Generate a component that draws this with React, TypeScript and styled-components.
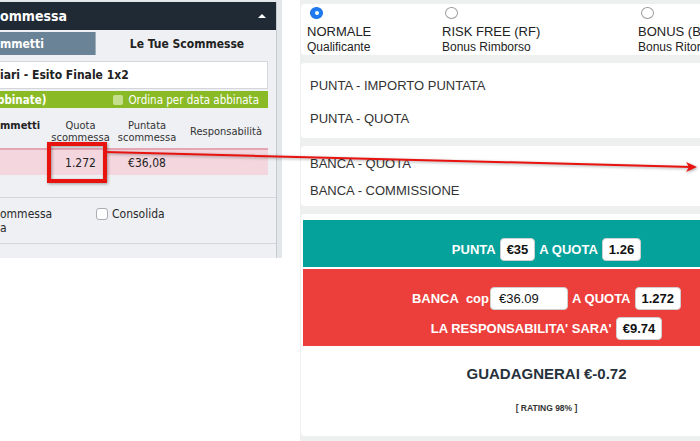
import React from "react";
import styled, { createGlobalStyle } from "styled-components";

const Global = createGlobalStyle`
  html, body { margin: 0; padding: 0; background: #ffffff; }
  body { width: 700px; height: 441px; overflow: hidden; }
  #root { width: 700px; height: 441px; }
  * { box-sizing: border-box; }
`;

const Page = styled.div`
  position: relative;
  display: flex;
  align-items: flex-start;
  width: 700px;
  height: 441px;
  overflow: hidden;
  background: #ffffff;
`;

/* ---------- left screenshot ---------- */
const LeftShot = styled.div`
  flex: 0 0 282px;
  height: 258px;
  padding-top: 2px;
  background: #e4e7ea;
  overflow: hidden;
  font-family: "DejaVu Sans Condensed", "DejaVu Sans", sans-serif;
  font-stretch: condensed;
  color: #2a2a2a;
`;

const Panel = styled.div`
  width: 277px;
  height: 256px;
  background: #eef0f4;
  border-right: 1px solid #c6cbd0;
  display: flex;
  flex-direction: column;
`;

const PanelHeader = styled.div`
  height: 28px;
  flex: 0 0 28px;
  background: #1f2a35;
  color: #ffffff;
  font-weight: bold;
  font-size: 14px;
  display: flex;
  align-items: center;
  justify-content: space-between;
  padding-right: 10px;
`;

const Caret = styled.span`
  width: 0;
  height: 0;
  border-left: 4px solid transparent;
  border-right: 4px solid transparent;
  border-bottom: 4px solid #ffffff;
  margin-top: -1px;
`;

const Tabs = styled.div`
  display: flex;
  height: 23px;
  flex: 0 0 23px;
  margin-top: 2px;
`;

const Tab = styled.div<{ $active?: boolean }>`
  display: flex;
  align-items: center;
  font-weight: bold;
  font-size: 12px;
  ${(p) =>
    p.$active
      ? `flex: 1; justify-content: center; color: #222; padding-left: 2px;`
      : `flex: 0 0 96px; background: #6b8396; color: #fff; border-right: 1px solid #9fb0bd;`}
`;

const EventBox = styled.div`
  margin: 6px 8px 0 0;
  height: 28px;
  flex: 0 0 28px;
  background: #ffffff;
  border: 1px solid #d3d7dc;
  border-left: none;
  display: flex;
  align-items: center;
  font-weight: bold;
  font-size: 12px;
  color: #222;
`;

const GreenBar = styled.div`
  margin: 2px 8px 0 0;
  height: 17px;
  flex: 0 0 17px;
  background: #8aba25;
  color: #ffffff;
  display: flex;
  align-items: center;
  justify-content: space-between;
  font-size: 11.5px;
  padding-right: 9px;
`;

const GreenTitle = styled.span`
  font-weight: bold;
  margin-left: -3px;
`;

const SortOption = styled.span`
  display: flex;
  align-items: center;
  gap: 5px;
`;

const GreenCheck = styled.span`
  width: 10px;
  height: 10px;
  border-radius: 2px;
  background: #c6df8f;
`;

const ColGrid = `
  display: grid;
  grid-template-columns: 51px 59px 74px 1fr;
`;

const HeadRow = styled.div`
  ${ColGrid}
  margin-right: 8px;
  height: 40px;
  flex: 0 0 40px;
  padding-top: 7px;
  align-items: center;
  font-size: 11px;
  line-height: 11.5px;
  color: #333;
`;

const HeadCell = styled.div<{ $first?: boolean }>`
  text-align: ${(p) => (p.$first ? "left" : "center")};
  white-space: nowrap;
  ${(p) => (p.$first ? "align-self: start; margin-top: 5px; font-weight: bold; color: #222;" : "")}
`;

const BetRow = styled.div`
  ${ColGrid}
  margin-right: 8px;
  height: 27px;
  flex: 0 0 27px;
  background: #f4d7de;
  border-top: 2px solid #e6a5b3;
  align-items: center;
  font-size: 12px;
  color: #222;
`;

const BetCell = styled.div`
  text-align: center;
`;

const OptionsRow = styled.div`
  margin-top: 22px;
  height: 47px;
  flex: 0 0 47px;
  border-top: 1px solid #d3d7db;
  border-bottom: 1px solid #d3d7db;
  display: flex;
  align-items: flex-start;
  padding-top: 9px;
  font-size: 12px;
  line-height: 14px;
  color: #2a2a2a;
`;

const OptionText = styled.div`
  width: 96px;
`;

const Consolida = styled.label`
  display: flex;
  align-items: center;
  gap: 4px;
`;

const WhiteCheck = styled.span`
  width: 12px;
  height: 12px;
  border: 1px solid #a9adb2;
  border-radius: 3px;
  background: #ffffff;
`;

/* ---------- right screenshot ---------- */
const RightShot = styled.div`
  flex: 0 0 494px;
  margin-left: 18px;
  height: 441px;
  background: #eef0f0;
  padding: 4px 2px 0 1px;
  font-family: "Liberation Sans", Arial, Helvetica, sans-serif;
  color: #333;
  display: flex;
  flex-direction: column;
  gap: 8px;
`;

const Card = styled.div`
  background: #ffffff;
  border-radius: 4px;
`;

const RadioCard = styled(Card)`
  height: 51px;
  display: flex;
  padding-left: 6px;
`;

const RadioOption = styled.div<{ $w?: number }>`
  ${(p) => (p.$w ? `flex: 0 0 ${p.$w}px;` : "flex: 1;")}
  display: flex;
  flex-direction: column;
  padding-top: 3px;
`;

const Radio = styled.span<{ $on?: boolean }>`
  width: 13px;
  height: 13px;
  margin-left: 3px;
  margin-bottom: 5px;
  border-radius: 50%;
  display: flex;
  align-items: center;
  justify-content: center;
  ${(p) =>
    p.$on
      ? `background: #1f7bf2; border: 1px solid #1a6fe0;`
      : `background: #fff; border: 1px solid #9a9a9a;`}
  &::after {
    content: "";
    width: 4px;
    height: 4px;
    border-radius: 50%;
    background: ${(p) => (p.$on ? "#ffffff" : "transparent")};
  }
`;

const RadioTitle = styled.div`
  font-size: 13px;
  line-height: 15px;
  color: #222;
  white-space: nowrap;
`;

const RadioSub = styled.div`
  font-size: 12px;
  line-height: 16px;
  color: #222;
  white-space: nowrap;
`;

const FieldCard = styled(Card)<{ $pt: number; $pb: number; $gap: number }>`
  display: flex;
  flex-direction: column;
  padding: ${(p) => `${p.$pt}px 9px ${p.$pb}px`};
  gap: ${(p) => p.$gap}px;
`;

const FieldLabel = styled.div`
  font-size: 13px;
  line-height: 16px;
  color: #333;
`;

const ResultCard = styled(Card)`
  height: 222px;
  padding: 6px 2px 0 2px;
  display: flex;
  flex-direction: column;
`;

const Band = styled.div<{ $tone: "teal" | "red" }>`
  background: ${(p) => (p.$tone === "teal" ? "#05a19b" : "#ec3f3b")};
  padding: 18px 0 6px;
  margin-top: ${(p) => (p.$tone === "red" ? "2px" : "0")};
  display: flex;
  flex-direction: column;
  align-items: center;
  gap: 7px;
`;

const BandRow = styled.div`
  display: flex;
  align-items: center;
  gap: 4px;
  height: 23px;
`;

const BandLabel = styled.span`
  color: #ffffff;
  font-weight: bold;
  font-size: 13px;
  white-space: nowrap;
`;

const Cop = styled.span`
  margin-left: 7px;
  margin-right: -3px;
`;

const ValueBox = styled.span<{ $input?: boolean }>`
  height: 23px;
  display: flex;
  align-items: center;
  background: #ffffff;
  border: 1px solid #cfcfcf;
  border-radius: 4px;
  color: #111;
  font-size: 13px;
  ${(p) =>
    p.$input
      ? `width: 78px; padding-left: 8px; font-weight: normal;`
      : `padding: 0 6px; font-weight: bold;`}
`;

const Profit = styled.div`
  margin-top: 18px;
  text-align: center;
  font-weight: bold;
  font-size: 15px;
  line-height: 20px;
  color: #27323c;
`;

const Rating = styled.div`
  margin-top: 18px;
  text-align: center;
  font-weight: bold;
  font-size: 8.5px;
  line-height: 12px;
  color: #333;
`;

/* ---------- annotation overlay ---------- */
const Overlay = styled.svg`
  position: absolute;
  left: 0;
  top: 0;
  width: 700px;
  height: 441px;
  pointer-events: none;
  filter: drop-shadow(1px 1px 1.5px rgba(0, 0, 0, 0.35));
`;

export default function App() {
  return (
    <>
      <Global />
      <Page>
        <LeftShot>
          <Panel>
            <PanelHeader>
              <span>ommessa</span>
              <Caret />
            </PanelHeader>
            <Tabs>
              <Tab>mmetti</Tab>
              <Tab $active>Le Tue Scommesse</Tab>
            </Tabs>
            <EventBox>iari - Esito Finale 1x2</EventBox>
            <GreenBar>
              <GreenTitle>bbinate)</GreenTitle>
              <SortOption>
                <GreenCheck />
                Ordina per data abbinata
              </SortOption>
            </GreenBar>
            <HeadRow>
              <HeadCell $first>mmetti</HeadCell>
              <HeadCell>
                Quota
                <br />
                scommessa
              </HeadCell>
              <HeadCell>
                Puntata
                <br />
                scommessa
              </HeadCell>
              <HeadCell>Responsabilità</HeadCell>
            </HeadRow>
            <BetRow>
              <BetCell />
              <BetCell>1.272</BetCell>
              <BetCell>€36,08</BetCell>
              <BetCell />
            </BetRow>
            <OptionsRow>
              <OptionText>
                ommessa
                <br />a
              </OptionText>
              <Consolida>
                <WhiteCheck />
                Consolida
              </Consolida>
            </OptionsRow>
          </Panel>
        </LeftShot>

        <RightShot>
          <RadioCard>
            <RadioOption $w={135}>
              <Radio $on />
              <RadioTitle>NORMALE</RadioTitle>
              <RadioSub>Qualificante</RadioSub>
            </RadioOption>
            <RadioOption $w={196}>
              <Radio />
              <RadioTitle>RISK FREE (RF)</RadioTitle>
              <RadioSub>Bonus Rimborso</RadioSub>
            </RadioOption>
            <RadioOption>
              <Radio />
              <RadioTitle>BONUS (BR)</RadioTitle>
              <RadioSub>Bonus Ritorno</RadioSub>
            </RadioOption>
          </RadioCard>

          <FieldCard $pt={15} $pb={11} $gap={17}>
            <FieldLabel>PUNTA - IMPORTO PUNTATA</FieldLabel>
            <FieldLabel>PUNTA - QUOTA</FieldLabel>
          </FieldCard>

          <FieldCard $pt={10} $pb={7} $gap={11}>
            <FieldLabel>BANCA - QUOTA</FieldLabel>
            <FieldLabel>BANCA - COMMISSIONE</FieldLabel>
          </FieldCard>

          <ResultCard>
            <Band $tone="teal">
              <BandRow>
                <BandLabel>PUNTA</BandLabel>
                <ValueBox>€35</ValueBox>
                <BandLabel>A QUOTA</BandLabel>
                <ValueBox>1.26</ValueBox>
              </BandRow>
            </Band>
            <Band $tone="red">
              <BandRow>
                <BandLabel>
                  BANCA<Cop>cop</Cop>
                </BandLabel>
                <ValueBox $input>€36.09</ValueBox>
                <BandLabel>A QUOTA</BandLabel>
                <ValueBox>1.272</ValueBox>
              </BandRow>
              <BandRow>
                <BandLabel>LA RESPONSABILITA' SARA'</BandLabel>
                <ValueBox>€9.74</ValueBox>
              </BandRow>
            </Band>
            <Profit>GUADAGNERAI €-0.72</Profit>
            <Rating>[ RATING 98% ]</Rating>
          </ResultCard>
        </RightShot>

        <Overlay viewBox="0 0 700 441">
          <rect x="49" y="144" width="56" height="37" fill="none" stroke="#e8120e" strokeWidth="4" />
          <line x1="105" y1="152" x2="692" y2="167" stroke="#e8120e" strokeWidth="2" />
          <path d="M686 162 L697 167 L686 172 L689 167 Z" fill="#e8120e" />
        </Overlay>
      </Page>
    </>
  );
}
